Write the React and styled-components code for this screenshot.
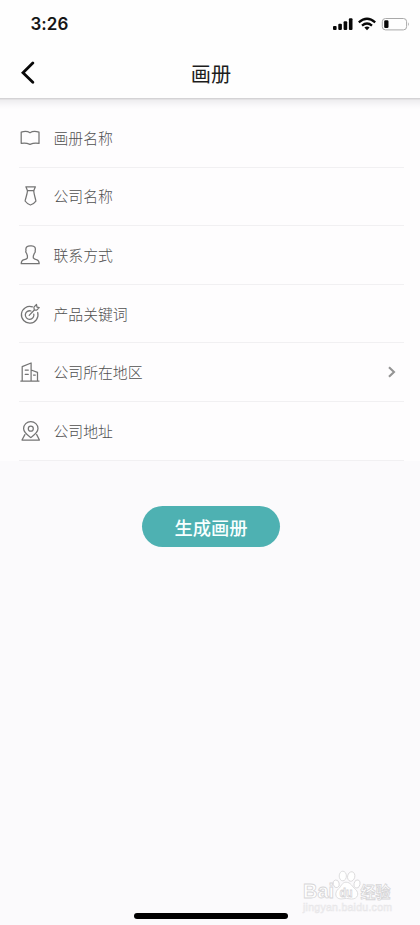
import React from "react";
import styled, { createGlobalStyle } from "styled-components";

const Global = createGlobalStyle`
  * { box-sizing: border-box; }
  body { margin: 0; background: #fbfafc; }
`;

const Screen = styled.main`
  position: relative;
  display: flex;
  flex-direction: column;
  align-items: stretch;
  height: 925px;
  width: 420px;
  overflow: hidden;
  background: #fbfafc;
  font-family: "Noto Sans CJK SC", sans-serif;
`;

const StatusBar = styled.div`
  display: flex;
  align-items: center;
  justify-content: space-between;
  height: 47px;
  padding: 0 10px 0 30.5px;
  background: #fefefe;
`;

const Clock = styled.span`
  font: 600 17px/20px Inter, sans-serif;
  letter-spacing: 0.05px;
  color: #161616;
`;

const StatusIcons = styled.svg`
  display: block;
  width: 78px;
  height: 16px;
`;

const Header = styled.header`
  display: grid;
  grid-template-columns: 60px 1fr 60px;
  align-items: center;
  height: 51px;
  background: #fefefe;
`;

const BackButton = styled.button`
  display: flex;
  height: 51px;
  padding: 13px 0 0 20px;
  border: 0;
  background: none;
`;

const Title = styled.h1`
  margin: 2px 0 0 2px;
  font-size: 20.2px;
  line-height: 30px;
  font-weight: 400;
  text-align: center;
  color: #1c1c1c;
`;

const HeaderShadow = styled.div`
  height: 11px;
  background: linear-gradient(#d0cfd1 0, #d8d7d9 1px, #eeedef 2px, #f2f1f3 4px, #f8f7f9 7px, #fdfcfd 10px);
`;

const Form = styled.section`
  display: flex;
  flex-direction: column;
  background: #fefdfe;
`;

const Row = styled.label`
  display: flex;
  align-items: center;
  height: 58.6px;
  margin: 0 16px 0 19px;
  padding: 0 7px 0 0;
  border-bottom: 1px solid #f1f0f2;
`;

const FieldIcon = styled.svg`
  width: 22px;
  height: 22px;
  margin-right: 12.5px;
  fill: none;
  stroke: #747474;
  stroke-width: 1.25;
  stroke-linejoin: round;
  stroke-linecap: round;
`;

const FieldLabel = styled.span`
  flex: 1;
  font-size: 14.85px;
  line-height: 22px;
  font-weight: 300;
  color: #505050;
`;

const Chevron = styled.svg`
  width: 10px;
  height: 14px;
`;

const Submit = styled.button`
  align-self: center;
  width: 138px;
  height: 41px;
  margin: 45.5px 0 0 2px;
  padding: 0;
  border: 0;
  border-radius: 21px;
  background: #4eb1b2;
  color: #f8ffff;
  font: 500 18.3px/28px "Noto Sans CJK SC", sans-serif;
`;

const HomeIndicator = styled.div`
  align-self: center;
  width: 154px;
  height: 6px;
  margin: auto 0 6px 2px;
  border-radius: 3px;
  background: #000;
`;

const Watermark = styled.svg`
  position: absolute;
  left: 300px;
  top: 868px;
  width: 96px;
  height: 50px;
`;

const icons = {
  album: <path d="M2.2 5.2Q7.5 3.5 11 5.8Q14.5 3.5 20 5.2V16.4Q15.5 15.4 11 17.3Q6.5 15.4 2.2 16.4Z" />,
  tie: (
    <>
      <path d="M6.9 1.8H16.4L14.7 5.7H8.5Z" />
      <path d="M8.5 5.7C8.1 9.8 6.8 12.4 6.1 16Q8.4 19.2 11.4 20Q14.5 19.2 16.9 16C16.2 12.4 15.1 9.8 14.7 5.7" />
    </>
  ),
  person: <path d="M8.4 11.8L7.5 9.1Q6.3 8.4 7 6.7C6.2 3 8.7 1.7 11.7 1.9C15.9 1.5 16.9 4.1 16.1 7Q16.6 8.5 15.4 9.3L14.3 12V13.9Q15 15.2 18 15.9Q20 16.5 20.2 19.7H2.2Q2.4 16.5 4.4 15.9Q8.1 15 8.4 13.8Z" />,
  target: (
    <>
      <path d="M13.4 3.9A8.3 8.3 0 1 0 18.7 9.5" />
      <path d="M12 8A4.3 4.3 0 1 0 14.8 11.1" />
      <path d="M10.2 12.4L15.3 7M15.3 7L14.9 4.1L17.5 1.5L18 4.1L20.2 4.6L17.7 7.1Z" />
    </>
  ),
  building: (
    <>
      <path d="M1.8 20H20M3.2 20V5.7L12.1 2V20M12.1 9L18.5 11.4V20" />
      <path d="M6.2 9H9.3M6.2 13.3H9.3M14.5 14H16.3" />
    </>
  ),
  location: (
    <>
      <path d="M11.8 17.5C9.8 16.1 4.6 12.9 4.6 8.6A7.2 7 0 0 1 19 8.6C19 12.9 13.8 16.1 11.8 17.5Z" />
      <circle cx="11.8" cy="8.7" r="2.5" />
      <path d="M5.9 14.6L3 20H20.4L17.7 14.6" />
    </>
  ),
};

const fields = [
  ["album", "画册名称"],
  ["tie", "公司名称"],
  ["person", "联系方式"],
  ["target", "产品关键词"],
  ["building", "公司所在地区", true],
  ["location", "公司地址"],
];

export default function App() {
  return (
    <Screen>
      <Global />
      <StatusBar>
        <Clock>3:26</Clock>
        <StatusIcons viewBox="0 0 78 16">
          <g fill="#080808">
            <rect x="1" y="10" width="3.6" height="4" rx="1" />
            <rect x="6.3" y="7.8" width="3.6" height="6.2" rx="1" />
            <rect x="11.6" y="5.3" width="3.6" height="8.7" rx="1" />
            <rect x="16.9" y="2.3" width="3.6" height="11.7" rx="1" />
          </g>
          <g fill="none" stroke="#080808" strokeWidth="2.3">
            <path d="M26.8 6.3Q35 -.7 43.2 6.3" />
            <path d="M30 9.6Q35 5.5 40 9.6" />
          </g>
          <path d="M32.4 11.6Q35 9.6 37.6 11.6L35 14.2Z" fill="#080808" />
          <rect x="50.3" y="2.5" width="24.3" height="11.4" rx="3.2" fill="none" stroke="#a9a9a9" />
          <rect x="52.2" y="4.3" width="4.3" height="7.8" rx="1.3" fill="#080808" />
          <path d="M76 6.2Q77.8 8.2 76 10.2Z" fill="#999" />
        </StatusIcons>
      </StatusBar>
      <Header>
        <BackButton aria-label="返回">
          <svg width="16" height="24" viewBox="0 0 16 24">
            <path d="M12.8 3L3 12.7L12.8 22.3" fill="none" stroke="#080808" strokeWidth="2.8" strokeLinecap="round" strokeLinejoin="miter" />
          </svg>
        </BackButton>
        <Title>画册</Title>
      </Header>
      <HeaderShadow />
      <Form>
        {fields.map(([icon, label, selectable]) => (
          <Row key={label}>
            <FieldIcon viewBox="0 0 22 22">{icons[icon]}</FieldIcon>
            <FieldLabel>{label}</FieldLabel>
            {selectable && (
              <Chevron viewBox="0 0 10 14">
                <path d="M2 2.2L7 7L2 11.8" fill="none" stroke="#949494" strokeWidth="2.1" />
              </Chevron>
            )}
          </Row>
        ))}
      </Form>
      <Submit>生成画册</Submit>
      <HomeIndicator />
      <Watermark viewBox="0 0 96 50">
        <g fill="#fff" stroke="#d6d5d7" strokeWidth="0.8" fontFamily="Liberation Sans, sans-serif" fontWeight="700">
          <text x="3" y="30" fontSize="20" textLength="31" lengthAdjust="spacingAndGlyphs">Bai</text>
          <ellipse cx="36.2" cy="15.8" rx="3" ry="3.9" transform="rotate(-15 36.2 15.8)" />
          <ellipse cx="42.8" cy="8" rx="3.6" ry="4.8" />
          <ellipse cx="51.2" cy="8.5" rx="3.6" ry="4.8" transform="rotate(12 51.2 8.5)" />
          <ellipse cx="57" cy="16" rx="3" ry="4.2" transform="rotate(15 57 16)" />
          <path d="M46 14.2C42 14.2 41.5 18.4 38.5 20.8C34.5 24 34.6 30.8 41 31Q46.5 29.8 51.5 31C58.2 31 59.5 25 55.5 21.4C52 18.6 50.8 14.2 46 14.2Z" />
          <text x="39.5" y="28.5" fontSize="12" textLength="13" lengthAdjust="spacingAndGlyphs">du</text>
          <text x="60.5" y="29.5" fontSize="15.5" fontFamily="Noto Sans CJK SC, sans-serif" textLength="30" lengthAdjust="spacingAndGlyphs">经验</text>
        </g>
        <text x="3" y="43" fontSize="10.5" fill="#f9f8fa" stroke="#e7e6e8" strokeWidth="0.55" fontFamily="Liberation Sans, sans-serif" textLength="89">jingyan.baidu.com</text>
      </Watermark>
    </Screen>
  );
}
